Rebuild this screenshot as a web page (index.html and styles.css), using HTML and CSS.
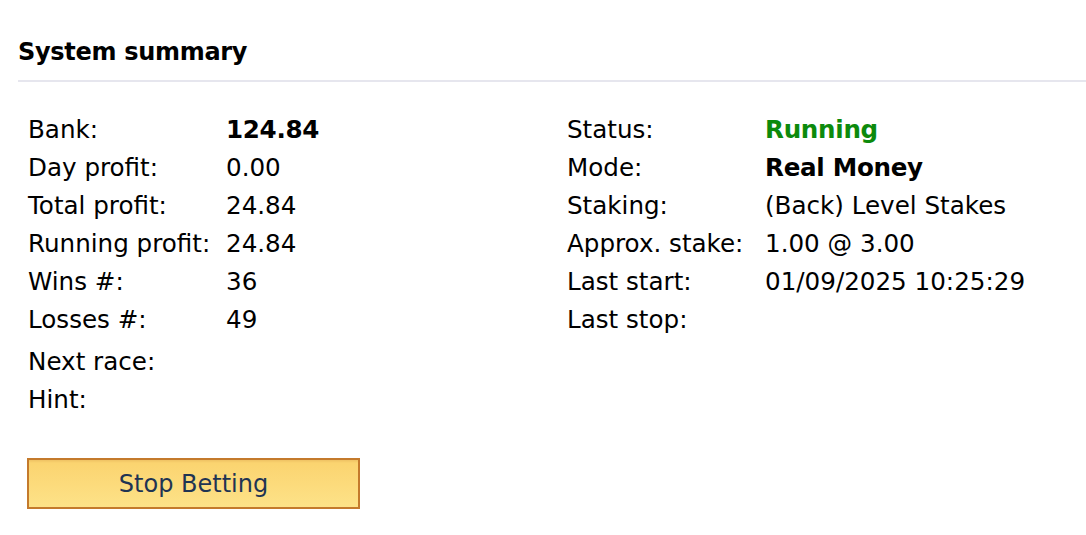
FILE: index.html
```html
<!DOCTYPE html>
<html>
<head>
<meta charset="utf-8">
<link rel="stylesheet" href="styles.css">
</head>
<body>
<div class="page">
  <h1 class="title">System summary</h1>
  <div class="grid">
    <div class="col">
      <div class="row"><span class="lbl">Bank:</span><span class="val bold">124.84</span></div>
      <div class="row"><span class="lbl">Day profit:</span><span class="val">0.00</span></div>
      <div class="row"><span class="lbl">Total profit:</span><span class="val">24.84</span></div>
      <div class="row"><span class="lbl">Running profit:</span><span class="val">24.84</span></div>
      <div class="row"><span class="lbl">Wins #:</span><span class="val">36</span></div>
      <div class="row"><span class="lbl">Losses #:</span><span class="val">49</span></div>
    </div>
    <div class="col">
      <div class="row"><span class="lbl">Status:</span><span class="val bold green">Running</span></div>
      <div class="row"><span class="lbl">Mode:</span><span class="val bold">Real Money</span></div>
      <div class="row"><span class="lbl">Staking:</span><span class="val">(Back) Level Stakes</span></div>
      <div class="row"><span class="lbl">Approx. stake:</span><span class="val">1.00 @ 3.00</span></div>
      <div class="row"><span class="lbl">Last start:</span><span class="val">01/09/2025 10:25:29</span></div>
      <div class="row"><span class="lbl">Last stop:</span><span class="val"></span></div>
    </div>
  </div>
  <div class="extra">
    <div class="row"><span class="lbl">Next race:</span></div>
    <div class="row"><span class="lbl">Hint:</span></div>
  </div>
  <button class="btn">Stop Betting</button>
</div>
</body>
</html>
```
FILE: styles.css
```css
html, body { margin: 0; padding: 0; background: #fff; }
body { font-family: "DejaVu Sans", Verdana, sans-serif; color: #000; }
.page { padding: 37px 0 0 18px; }
.title { margin: 0; font-size: 24px; font-weight: bold; line-height: 30px; padding-bottom: 13px; border-bottom: 2px solid #e6e6ee; letter-spacing: -0.3px; }
.grid { display: grid; grid-template-columns: 539px 1fr; padding: 28px 0 0 10px; }
.col { display: flex; flex-direction: column; }
.row { display: flex; height: 38px; align-items: center; font-size: 24.6px; }
.lbl { width: 198px; flex: none; }
.bold { font-weight: bold; letter-spacing: -0.3px; }
.green { color: #0c8a0c; }
.extra { padding: 4px 0 0 10px; }
.btn { margin: 40px 0 0 9px; width: 333px; height: 51px; border: 2px solid #c47a2c; background: linear-gradient(#efc263 0, #fbd470 3px, #fde288 100%); font-family: "DejaVu Sans", Verdana, sans-serif; font-size: 24px; color: #1f3453; padding: 0; }
```
